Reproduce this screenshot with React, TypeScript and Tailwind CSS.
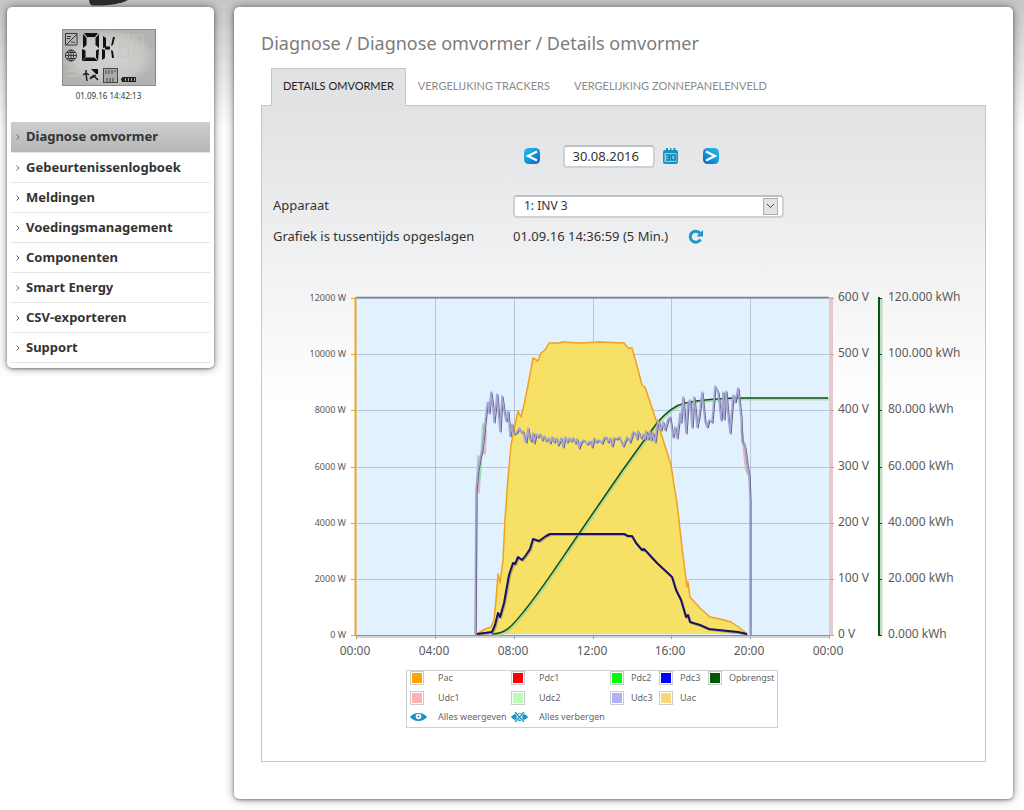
import React from 'react';

const menuItems = [
  'Diagnose omvormer',
  'Gebeurtenissenlogboek',
  'Meldingen',
  'Voedingsmanagement',
  'Componenten',
  'Smart Energy',
  'CSV-exporteren',
  'Support',
];

const tabs = ['DETAILS OMVORMER', 'VERGELIJKING TRACKERS', 'VERGELIJKING ZONNEPANELENVELD'];

const legendRows = [
  [
    { label: 'Pac', color: 'bg-[#ffa500]' },
    { label: 'Pdc1', color: 'bg-[#ff0000]' },
    { label: 'Pdc2', color: 'bg-[#00ff00]' },
    { label: 'Pdc3', color: 'bg-[#0000ff]' },
    { label: 'Opbrengst', color: 'bg-[#005a00]' },
  ],
  [
    { label: 'Udc1', color: 'bg-[#ffb0b0]' },
    { label: 'Udc2', color: 'bg-[#b4ffb4]' },
    { label: 'Udc3', color: 'bg-[#b0b0f4]' },
    { label: 'Uac', color: 'bg-[#fad878]' },
  ],
];

// chart geometry
const LEFT = 356;
const RIGHT = 829;
const TOP = 298;
const BOTTOM = 635;

const rows = [0, 1, 2, 3, 4, 5, 6].map((i) => ({
  y: Math.round(TOP + ((BOTTOM - TOP) / 6) * i),
  power: `${(6 - i) * 2000} W`,
  volt: `${(6 - i) * 100} V`,
  energy: i === 6 ? '0.000 kWh' : `${(6 - i) * 20}.000 kWh`,
}));

const cols = ['00:00', '04:00', '08:00', '12:00', '16:00', '20:00', '00:00'].map((label, i) => ({
  x: Math.round(LEFT + ((RIGHT - LEFT) / 6) * i),
  label,
}));

const pac =
  '477,634 485,629 491,627 494,620 496,600 498,574 500,583 503,560 505,520 508,478 511,445 516,420 518,411 521,417 524,405 529,380 533,358 538,361 541,353 545,350 549,343 560,343 562,342 580,343 600,342 624,343 628,348 632,348 636,362 642,385 645,387 651,405 657,423 660,430 671,465 674,485 677,503 682,547 687,587 688,582 690,597 700,608 710,617 720,619 731,622 740,628 747,634';

const pdc =
  '477,634 492,632 495,625 498,613 500,617 504,603 509,575 513,563 515,564 518,557 522,560 526,555 530,549 533,539 539,541 546,536 550,534 624,534 628,536 632,536 636,543 642,550 644,549 657,563 672,577 676,590 681,600 686,617 688,615 690,622 700,625 709,629 728,631 738,632 747,634';

const udc =
  '475,634 476,490 478,470 480,458 482,450 484,432 485,423 487,404 488,402 489,413 491,392 493,408 494,422 497,394 499,420 500,431 502,396 504,410 506,421 508,411 510,436 512,424 514,434 517,432 519,428 521,432 523,431 525,441 526,442 528,428 530,440 531,441 533,433 534,443 536,434 538,437 540,434 542,440 544,436 546,441 548,438 550,443 552,437 554,442 556,438 558,445 561,438 563,447 565,437 567,442 569,438 571,441 573,438 575,443 577,439 579,448 581,442 584,440 587,444 590,441 592,447 594,438 596,442 599,440 602,443 604,438 606,437 608,442 610,438 612,446 614,438 617,439 619,437 621,441 623,446 627,437 630,442 633,432 635,433 637,439 638,431 641,438 643,434 645,439 646,431 648,439 650,431 651,440 653,433 655,442 658,420 661,430 663,422 665,430 668,419 670,417 673,437 675,427 677,438 680,413 681,422 683,397 686,433 688,403 690,400 692,427 694,397 697,427 699,417 702,392 705,422 707,427 709,420 712,422 715,386 718,392 721,420 723,392 724,419 726,391 728,415 730,433 733,395 735,402 738,388 741,417 742,442 745,448 747,465 749,475 750,500 750,634';

const yieldLine =
  'M492,634 C506,634 512,626 525,610 C545,585 560,561 578,535 L602,500 L622,471 L640,446 L657,423 C668,410 676,405 685,403 C700,400 720,398 745,398 L828,398';

const Display: React.FC = () => (
  <svg className="mx-auto block" width="94" height="57" viewBox="0 0 94 57" role="img" aria-label="Status OK">
    <defs>
      <radialGradient id="lcd">
        <stop offset="0" stopColor="#d2d2d0" />
        <stop offset="0.7" stopColor="#c8c8c6" />
        <stop offset="1" stopColor="#b2b2b0" />
      </radialGradient>
    </defs>
    <rect width="94" height="57" fill="url(#lcd)" />
    <rect x="0.5" y="0.5" width="93" height="56" fill="none" stroke="#8c8c8c" />
    <g fill="none" stroke="#c4c4c2" strokeWidth="2" strokeOpacity="0.6">
      <path d="M58 6h9v11h-9zM58 17v11h9V17M72 6h9v11h-9zM72 17v11h9V17M58 40h8M76 40h8M5 42h10M5 47h10" />
    </g>
    <g fill="none" stroke="#3a3a3a">
      <path d="M3.500 4.500h11.500v11.500h-11.500zM4 16L15 5M5 7.500h4M5 9.500h3M9 13.500c1-1.500 2 1 4-.5" />
      <circle cx="9" cy="26.500" r="5.500" />
      <ellipse cx="9" cy="26.500" rx="2.500" ry="5.500" />
      <path d="M3.500 26.500h11M9 21v11M4.500 23.500h9M4.500 29.500h9" />
    </g>
    <g fill="#111">
      <path d="M22 4h14l-3 4h-8zM21 5l3.500 4v7L21 19zM37 5l-3.500 4v7l3.500 3zM20 20l3.500 1.500v7L20 32zM37 20l-3 1.500v7l2 3.500zM24 28.500h8.500l3 3.500H20.500z" />
      <path d="M41 7l3 2v9l-3 1zM40 20l3 1v8l-3 2zM43 17.500h5v3h-5zM51 8h2l-2 8-2 1zM49 21l2 1 1 7h-2z" />
      <path d="M29 40h7v5h-2l-2-2z" />
    </g>
    <g fill="none" stroke="#1c1c1c" strokeWidth="1.500">
      <path d="M24 41v4M21 46l3-2 3 2M24 45l1 7M28 50l6-4M31 46l5 5M28 49l3-2" />
    </g>
    <rect x="41.500" y="39.500" width="14" height="14" fill="#aaa" stroke="#444" />
    <path d="M43 42h11M43 44h8M44 50h9M44 52h9" stroke="#444" strokeDasharray="2 1" />
    <path d="M60 48h14v5H60zM59 49.500h1v2h-1z" fill="#222" />
    <path d="M63.500 49v3M66.500 49v3M69.500 49v3M72.500 49v3" stroke="#aaa" />
  </svg>
);

const ArrowIcon: React.FC<{ next?: boolean }> = ({ next }) => (
  <svg width="16" height="16" viewBox="0 0 16 16" aria-hidden="true">
    <defs>
      <linearGradient id={next ? 'arrowNext' : 'arrowPrev'} x1={next ? '1' : '0'} x2={next ? '0' : '1'} y1="0" y2="1">
        <stop offset="0" stopColor="#2cc0ea" />
        <stop offset="0.6" stopColor="#148cd8" />
        <stop offset="1" stopColor="#0b62bc" />
      </linearGradient>
    </defs>
    <rect width="16" height="16" rx="4.500" fill={next ? 'url(#arrowNext)' : 'url(#arrowPrev)'} />
    <path d={next ? 'M3 3.500L12 8L3 12.500' : 'M13 3.500L4 8L13 12.500'} fill="none" stroke="#fff" strokeWidth="2.200" />
  </svg>
);

const CalendarIcon: React.FC = () => (
  <svg width="15" height="16" viewBox="0 0 15 16" aria-hidden="true">
    <path d="M2 2h11a2 2 0 0 1 2 2v10a2 2 0 0 1-2 2H2a2 2 0 0 1-2-2V4a2 2 0 0 1 2-2z" fill="#1594c4" />
    <path d="M3 0h2v3H3zM7 0h1.500v3H7zM10.500 0h2v3h-2z" fill="#1594c4" />
    <path d="M1.500 5h12v9h-12z" fill="#7fd0ea" />
    <path d="M3 7h3.500v5H3M3.500 9.500h3M8.500 7h3.500v5H8.500z" fill="none" stroke="#0d7cae" strokeWidth="1.500" />
  </svg>
);

const RefreshIcon: React.FC = () => (
  <svg width="16" height="16" viewBox="0 0 16 16" aria-hidden="true">
    <path d="M12 4.200A5.500 5.500 0 1 0 12.500 10.500" fill="none" stroke="#1b97cb" strokeWidth="3" />
    <path d="M15 1v6.500H8.500z" fill="#1b97cb" />
  </svg>
);

const EyeIcon: React.FC<{ crossed?: boolean }> = ({ crossed }) => (
  <svg width="17" height="10" viewBox="0 0 17 10" aria-hidden="true">
    <path d="M0 5C3 1.500 6 1 8.500 1S14 1.500 17 5C14 8.500 11 9 8.500 9S3 8.500 0 5z" fill="#1b93c2" />
    <circle cx="8.500" cy="4.500" r="2.800" fill="#fff" />
    <circle cx="8.500" cy="4.500" r="1" fill="#1b93c2" />
    {crossed && (
      <>
        <path d="M4 0L13 10M13 0L4 10" stroke="#e8f6fb" strokeWidth="2.600" />
        <path d="M4 0L13 10M13 0L4 10" stroke="#1b93c2" strokeWidth="1.200" />
      </>
    )}
  </svg>
);

const Chart: React.FC = () => (
  <svg
    className="block w-full text-xs"
    viewBox="262 284 723 377"
    role="img"
    aria-label="Opbrengst 30.08.2016"
    fill="#5a5a5a"
  >
    <rect x={LEFT} y={TOP} width={RIGHT - LEFT} height={BOTTOM - TOP} fill="#e1f1fe" />
    <g stroke="#70708c" strokeOpacity="0.35" shapeRendering="crispEdges">
      {rows.map((row) => (
        <line key={row.y} x1={LEFT} x2={RIGHT} y1={row.y} y2={row.y} />
      ))}
      {cols.slice(1, 6).map((col) => (
        <line key={col.x} x1={col.x} x2={col.x} y1={TOP} y2={BOTTOM} />
      ))}
    </g>
    <polygon points={pac} fill="#f6e065" />
    <line x1={LEFT} x2={RIGHT} y1={TOP - 0.5} y2={TOP - 0.5} stroke="#80808c" strokeWidth="1.500" />
    <line x1={LEFT} x2={RIGHT} y1={BOTTOM + 2} y2={BOTTOM + 2} stroke="#d4d4d4" strokeWidth="2" />
    <line x1={LEFT} x2={RIGHT} y1={BOTTOM + 0.5} y2={BOTTOM + 0.5} stroke="#9c9070" />

    <g fill="none" strokeLinejoin="round">
      <polyline points={pac} stroke="#f2a01e" strokeWidth="1.500" />
      <path d={yieldLine} stroke="#9fd59a" strokeWidth="3" strokeOpacity="0.7" transform="translate(1 1)" />
      <path d={yieldLine} stroke="#15521a" strokeWidth="1.500" />
      <polyline points="476,634 477,480 479,492 481,455" stroke="#e8b4bc" strokeWidth="2" />
      <polyline points="476,520 478,456 480,478 483,424 485,430" stroke="#a4dcb4" strokeWidth="2" />
      <polyline points="483,450 485,454 486,430" stroke="#e8b4bc" strokeWidth="2" />
      <polyline points="741,430 743,437 744,452 746,470 749,476" stroke="#ecaeb0" strokeWidth="2" />
      <polyline points="742,440 745,444 748,466 750,480" stroke="#8cc8bc" strokeWidth="2" />
      <polyline points={udc} stroke="#606078" strokeWidth="1.200" transform="translate(1 1)" />
      <polyline points={udc} stroke="#a4a4da" strokeWidth="1.600" />
      <polyline points={pdc} stroke="#8c8450" strokeWidth="2" strokeOpacity="0.6" transform="translate(1 1)" />
      <polyline points={pdc} stroke="#18106c" strokeWidth="2" />
    </g>

    {/* power axis */}
    <path d={`M${LEFT - 0.5} ${TOP - 1}V${BOTTOM + 1}`} stroke="#eba520" strokeWidth="2" />
    {rows.map((row) => (
      <g key={row.power}>
        <path d={`M${LEFT - 5} ${row.y + 0.5}h4`} stroke="#eba520" />
        <text x="346" y={row.y + 3} textAnchor="end" fontSize="9">
          {row.power}
        </text>
      </g>
    ))}

    {/* voltage axis */}
    <path d={`M${RIGHT + 2} ${TOP - 1}V${BOTTOM + 1}`} stroke="#e6c8cc" strokeWidth="4" />
    {rows.map((row) => (
      <g key={row.volt}>
        <path d={`M${RIGHT + 1} ${row.y + 0.5}h4`} stroke="#c4a4a8" />
        <text x="838" y={row.y + 3}>
          {row.volt}
        </text>
      </g>
    ))}

    {/* energy axis */}
    <path d={`M881 ${TOP}V${BOTTOM}`} stroke="#c4dcc4" strokeWidth="3" />
    <path d={`M879 ${TOP - 1}V${BOTTOM + 1}`} stroke="#0a500e" strokeWidth="2" />
    {rows.map((row) => (
      <g key={row.energy}>
        <path d={`M879 ${row.y + 0.5}h3`} stroke="#0a500e" />
        <text x="888" y={row.y + 3}>
          {row.energy}
        </text>
      </g>
    ))}

    {cols.map((col, i) => (
      <g key={i}>
        <path d={`M${col.x + 0.5} ${BOTTOM}v4`} stroke="#a0a0a0" />
        <text x={col.x - 1} y="655" textAnchor="middle">
          {col.label}
        </text>
      </g>
    ))}
  </svg>
);

const Legend: React.FC = () => (
  <div className="mt-[9px] mr-[207px] ml-36 border border-[#cfcfcf] bg-white pb-1 pl-[3px] text-[9px] leading-3 text-[#666]">
    {legendRows.map((row, i) => (
      <div key={i} className="grid h-5 grid-cols-[101px_99px_49px_49px_auto] items-start">
        {row.map((item, j) => (
          <div key={item.label} className={j < 2 ? 'flex items-center gap-3.5' : 'flex items-center gap-[7px]'}>
            <span className="border border-[#ccc] bg-white p-px">
              <span className={`block h-2.5 w-2.5 ${item.color}`} />
            </span>
            {item.label}
          </div>
        ))}
      </div>
    ))}
    <div className="grid grid-cols-[101px_auto]">
      <button className="flex items-center gap-[11px] whitespace-nowrap">
        <EyeIcon />
        Alles weergeven
      </button>
      <button className="flex items-center gap-[11px] whitespace-nowrap">
        <EyeIcon crossed />
        Alles verbergen
      </button>
    </div>
  </div>
);

const App: React.FC = () => {
  return (
    <div className="relative flex min-h-screen items-start gap-5 bg-[linear-gradient(#c6c6c6,#ffffff_130px)] pt-[7px] pr-[11px] pb-[11px] pl-[7px] font-['Noto_Sans','Open_Sans',sans-serif] text-[#333]">
      <svg className="absolute top-0 left-[89px]" width="40" height="6" viewBox="0 0 40 6" aria-hidden="true">
        <path d="M0 0H39C32 4 18 6 3 5.500L1 4z" fill="#2a2a2a" />
      </svg>

      <aside className="w-[207px] shrink-0 rounded-[5px] bg-white px-1 pt-[22px] pb-[5px] shadow-[0_0_10px_rgba(0,0,0,0.45),0_1px_3px_rgba(0,0,0,0.35)]">
        <div className="pr-1">
          <Display />
          <p className="mt-1 mb-5 text-center text-[8px] leading-3">01.09.16 14:42:13</p>
        </div>
        <nav>
          {menuItems.map((item, i) => (
            <a
              key={item}
              href="#"
              className={`flex items-center border-b border-[#e4e4e4] pl-[5px] text-[13px] font-bold ${
                i === 0 ? 'h-[31px] bg-linear-to-b from-[#cdcecf] to-[#b5b6b8]' : 'h-[30px]'
              }`}
            >
              <svg className="mr-1.5" width="4" height="6" viewBox="0 0 4 6" aria-hidden="true">
                <path d="M0.500 0.500L3 3L0.500 5.500" fill="none" stroke="#666" />
              </svg>
              {item}
            </a>
          ))}
        </nav>
      </aside>

      <main className="min-w-0 flex-1 rounded-[5px] bg-white px-[27px] pt-6 pb-[37px] shadow-[0_0_10px_rgba(0,0,0,0.45),0_1px_3px_rgba(0,0,0,0.35)]">
        <h1 className="text-lg leading-6 text-[#7c7c7c]">Diagnose / Diagnose omvormer / Details omvormer</h1>

        <div className="relative mt-[13px] flex pl-[10px]" role="tablist">
          {tabs.map((tab, i) => (
            <button
              key={tab}
              role="tab"
              aria-selected={i === 0}
              className={`-mb-px h-[38px] border px-[11px] pb-0.5 font-[Lato,sans-serif] text-[11px] whitespace-nowrap ${
                i === 0 ? 'border-[#c4c6c8] border-b-[#e1e2e4] bg-[#e1e2e4] text-[#222]' : 'border-transparent text-[#8c8c8c]'
              }`}
            >
              {tab}
            </button>
          ))}
        </div>

        <section className="border border-[#c4c6c8] bg-[linear-gradient(#e1e2e4,#ffffff_300px)] pt-[38px] pb-[33px]">
          <div className="flex h-6 items-center justify-center pr-[5px]">
            <button aria-label="Vorige dag">
              <ArrowIcon />
            </button>
            <input
              type="text"
              aria-label="Datum"
              defaultValue="30.08.2016"
              className="ml-[23px] h-[23px] w-[92px] rounded-[4px] border-2 border-[#d0d1d2] border-t-[#bfc0c1] bg-white pl-2 text-[13px]"
            />
            <button className="ml-2" aria-label="Kalender">
              <CalendarIcon />
            </button>
            <button className="ml-[25px]" aria-label="Volgende dag">
              <ArrowIcon next />
            </button>
          </div>

          <div className="mt-[26px] flex h-6 items-center pl-[11px] text-[13px]">
            <label htmlFor="device" className="w-60">
              Apparaat
            </label>
            <div className="relative">
              <select
                id="device"
                className="block h-[23px] w-[271px] appearance-none rounded-[4px] border-2 border-[#d0d1d2] border-t-[#bfc0c1] bg-white pl-[9px] text-xs"
              >
                <option>1: INV 3</option>
              </select>
              <span className="pointer-events-none absolute top-[3px] right-1.5 flex h-[17px] w-[15px] items-center justify-center border border-[#adadad] bg-[#e3e3e3]">
                <svg width="9" height="6" viewBox="0 0 9 6" aria-hidden="true">
                  <path d="M1 1L4.500 4.500L8 1" fill="none" stroke="#444" />
                </svg>
              </span>
            </div>
          </div>

          <div className="mt-[7px] flex h-6 items-center pl-[11px] text-[13px]">
            <span className="w-60">Grafiek is tussentijds opgeslagen</span>
            <span>01.09.16 14:36:59 (5 Min.)</span>
            <button className="ml-5" aria-label="Vernieuwen">
              <RefreshIcon />
            </button>
          </div>

          <div className="mt-[35px]">
            <Chart />
          </div>
          <Legend />
        </section>
      </main>
    </div>
  );
};

export default App;
